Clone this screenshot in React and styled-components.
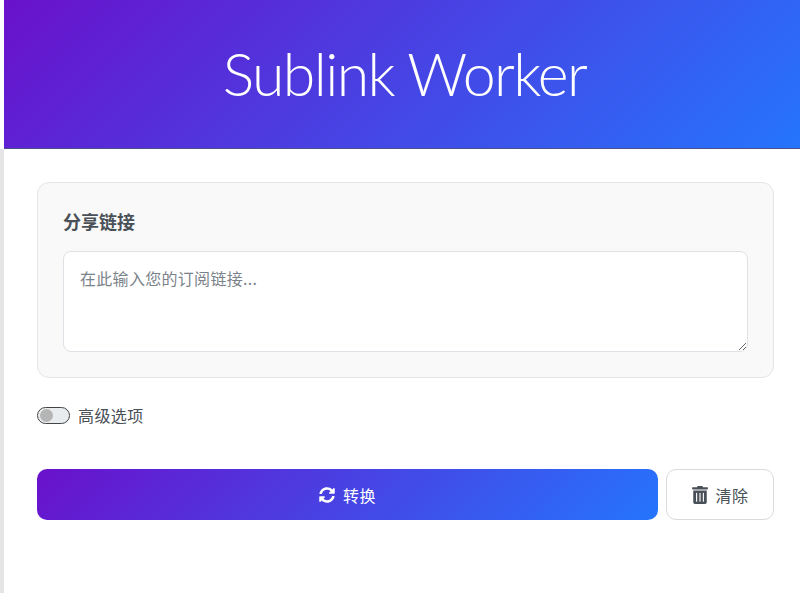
import React from "react";
import styled, { createGlobalStyle } from "styled-components";
import { FaSyncAlt, FaTrashAlt } from "react-icons/fa";

const Global = createGlobalStyle`
  html, body { margin: 0; padding: 0; background: #fff; height: 100%; overflow: hidden; }
  body { font-family: "Noto Sans CJK SC", "Liberation Sans", sans-serif; }
  * { box-sizing: border-box; }
`;
const Page = styled.div`
  height: 593px;
  width: 800px;
  overflow: hidden;
  display: flex;
`;
const Rail = styled.div`
  width: 4px;
  margin-top: 149px;
  background: #e5e5e5;
  flex: none;
`;
const Main = styled.div`
  flex: 1;
  min-width: 0;
`;
const Header = styled.header`
  height: 149px;
  padding: 0 0 2px 5px;
  display: flex;
  align-items: center;
  justify-content: center;
  background: linear-gradient(135deg, #6a11cb 0%, #2575fc 100%);
  border-bottom: 1px solid #4a4f8a;
`;
const Title = styled.h1`
  margin: 0;
  font-family: Lato, "Open Sans", sans-serif;
  font-weight: 300;
  font-size: 59px;
  letter-spacing: -1.6px;
  line-height: 67px;
  color: #fff;
`;
const Body = styled.main`
  padding: 33px 26px 0 33px;
`;
const Card = styled.section`
  height: 196px;
  padding: 22px 25px;
  background: #f9f9f9;
  border: 1px solid #e3e5e8;
  border-radius: 12px;
`;
const Label = styled.label`
  display: block;
  font-size: 18px;
  line-height: 32px;
  font-weight: 700;
  color: #495057;
  margin-bottom: 14px;
`;
const Area = styled.textarea`
  display: block;
  width: 100%;
  height: 101px;
  padding: 14px 16px;
  font-family: inherit;
  font-size: 16px;
  letter-spacing: 0.3px;
  line-height: 24px;
  color: #495057;
  background: #fff;
  border: 1px solid #dee2e6;
  border-radius: 8px;
  outline: none;
  &::placeholder { color: #7b838a; opacity: 1; }
`;
const ToggleRow = styled.div`
  display: flex;
  align-items: center;
  gap: 8px;
  margin-top: 26px;
  height: 22px;
  font-size: 16px;
  letter-spacing: 0.4px;
  color: #495057;
`;
const Toggle = styled.span`
  display: flex;
  align-items: center;
  width: 33px;
  height: 17px;
  padding-left: 2px;
  background: #e9ecef;
  border: 1px solid #444;
  border-radius: 9px;
`;
const Knob = styled.span`
  width: 13px;
  height: 13px;
  border-radius: 50%;
  background: #b5b5b5;
`;
const Actions = styled.div`
  display: flex;
  gap: 8px;
  margin-top: 43px;
`;
const Button = styled.button`
  display: flex;
  align-items: center;
  justify-content: center;
  height: 51px;
  font-family: inherit;
  font-size: 16px;
  letter-spacing: 0.5px;
  border-radius: 10px;
`;
const Primary = styled(Button)`
  flex: 1;
  gap: 8px;
  color: #fff;
  border: 0;
  background: linear-gradient(135deg, #6a11cb 0%, #2575fc 100%);
`;
const Secondary = styled(Button)`
  width: 108px;
  gap: 6px;
  color: #495057;
  background: #fff;
  border: 1px solid #d8dade;
`;

export default function App() {
  return (
    <Page>
      <Global />
      <Rail />
      <Main>
        <Header><Title>Sublink Worker</Title></Header>
        <Body>
          <Card>
            <Label htmlFor="link">分享链接</Label>
            <Area id="link" placeholder="在此输入您的订阅链接..." />
          </Card>
          <ToggleRow>
            <Toggle><Knob /></Toggle>
            <span>高级选项</span>
          </ToggleRow>
          <Actions>
            <Primary><FaSyncAlt size={16} /><span>转换</span></Primary>
            <Secondary><FaTrashAlt size={18} /><span>清除</span></Secondary>
          </Actions>
        </Body>
      </Main>
    </Page>
  );
}
